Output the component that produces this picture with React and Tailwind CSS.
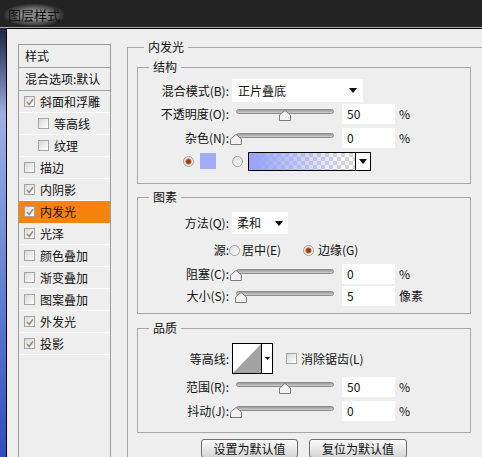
import React from 'react';

const layers = [
  { name: '斜面和浮雕', on: true },
  { name: '等高线', on: false, sub: true },
  { name: '纹理', on: false, sub: true },
  { name: '描边', on: false },
  { name: '内阴影', on: true },
  { name: '内发光', on: true, active: true },
  { name: '光泽', on: true },
  { name: '颜色叠加', on: false },
  { name: '渐变叠加', on: false },
  { name: '图案叠加', on: false },
  { name: '外发光', on: true },
  { name: '投影', on: true },
];

const Check = ({ on }) => (
  <span className="w-[11px] h-[11px] shrink-0 border border-[#a4a4a4] bg-gradient-to-br from-[#d9d9d9] to-white flex items-center justify-center">
    {on && (
      <svg width="8" height="8" viewBox="0 0 8 8">
        <path d="M1 4 L3.2 6.5 L7 1.2" stroke="#9c8a76" strokeWidth="1.6" fill="none" />
      </svg>
    )}
  </span>
);

const Radio = ({ on }) => (
  <svg width="11" height="11" viewBox="0 0 11 11" className="shrink-0">
    <defs>
      <linearGradient id="rg" x1="0" y1="0" x2="1" y2="1">
        <stop offset="0" stopColor="#dcdcdc" />
        <stop offset="1" stopColor="#ffffff" />
      </linearGradient>
    </defs>
    <circle cx="5.5" cy="5.5" r="5" fill="url(#rg)" stroke="#a0a0a0" />
    {on && <circle cx="5.5" cy="5.5" r="2.8" fill="#9a3a14" stroke="#d68a5c" strokeWidth="0.8" />}
  </svg>
);

const Arrow = () => (
  <svg width="8" height="5" viewBox="0 0 8 5">
    <path d="M0 0 H8 L4 5 Z" fill="#111" />
  </svg>
);

const Slider = ({ pos }) => (
  <div className="relative ml-[1px] w-[104px] h-[14px] shrink-0">
    <div className="absolute left-[6px] right-0 top-[2px] h-[5px] rounded-full border border-[#8c8c8c] bg-gradient-to-b from-[#9a9a9a] to-[#cfcfcf]" />
    <svg width="12" height="11" viewBox="0 0 12 11" className="absolute top-[3px]" style={{ left: pos }}>
      <path d="M6 0.5 L11.5 5 V10.5 H0.5 V5 Z" fill="#f2f2f2" stroke="#7c7c7c" />
    </svg>
  </div>
);

const Row = ({ label, className, children }) => (
  <div className={`flex items-center ${className}`}>
    <span className="w-[91px] shrink-0 text-right">{label}</span>
    {children}
  </div>
);

const SliderRow = ({ label, value, pos, unit = '%', className }) => (
  <Row label={label} className={className}>
    <Slider pos={pos} />
    <div className="ml-[8px] w-[53px] h-[20px] bg-white pl-[5px] leading-[20px] shrink-0">{value}</div>
    <span className="ml-[4px]">{unit}</span>
  </Row>
);

const Group = ({ title, className, children }) => (
  <fieldset className={`w-[334px] border border-[#a6a6a6] p-0 m-0 ${className}`}>
    <legend className="ml-[11px] px-[4px] leading-[14px]">{title}</legend>
    {children}
  </fieldset>
);

export default function App() {
  return (
    <div className="w-[482px] h-[457px] overflow-hidden bg-[#232323] text-[12px] leading-[14px] text-[#111] font-['Noto_Sans_CJK_SC',sans-serif]">
      <div className="h-[28px] border-b border-[#a8a8a8] pl-[4px] pt-[4px]">
        <span className="inline-block px-[4px] py-[3px] rounded-[8px] bg-[radial-gradient(ellipse_at_center,#8a8a8a_30%,rgba(60,60,60,0)_75%)] text-[13px] leading-[16px] text-[#101010]">图层样式</span>
      </div>
      <div className="flex h-[429px]">
        <div className="w-[6px] shrink-0 bg-gradient-to-b from-[#1c2440] via-[#9fb0e6] via-20% to-[#2e4dbd]" />
        <div className="flex flex-1 items-start bg-[#eeeeee] border-t border-l border-black">
          {/* 样式列表 */}
          <div className="ml-[11px] mt-[15px] w-[93px] h-[420px] shrink-0 border border-[#9c9c9c] bg-[#eeeeee]">
            <div className="h-[23px] border-b border-[#a4a4a4] pl-[6px] flex items-center">样式</div>
            <div className="h-[23px] border-b border-[#a4a4a4] pl-[6px] flex items-center">混合选项:默认</div>
            {layers.map((l) => (
              <div
                key={l.name}
                className={`h-[22px] flex items-center gap-[5px] border-b ${l.sub ? 'pl-[19px]' : 'pl-[5px]'} ${l.active ? 'bg-[#f7830f] border-[#f7830f]' : 'border-[#fafafa]'}`}
              >
                <Check on={l.on} />
                <span>{l.name}</span>
              </div>
            ))}
          </div>

          {/* 内发光 */}
          <fieldset className="ml-[16px] mt-[11px] w-[370px] h-[420px] shrink-0 border-t border-l border-r-0 border-b-0 border-[#a6a6a6] p-0 m-0">
            <legend className="ml-[16px] px-[4px] leading-[14px]">内发光</legend>
            <div className="pl-[9px] pt-[6px]">
              <Group title="结构">
                <div className="pt-[5px] pb-[10px]">
                  <Row label="混合模式(B):" className="h-[23px]">
                    <div className="ml-[3px] w-[131px] h-[23px] bg-white flex items-center justify-between pl-[6px] pr-[6px]">
                      <span>正片叠底</span>
                      <Arrow />
                    </div>
                  </Row>
                  <SliderRow label="不透明度(O):" value="50" pos={49} className="h-[24px]" />
                  <SliderRow label="杂色(N):" value="0" pos={0} className="h-[23px]" />
                  <div className="h-[24px] flex items-center pl-[45px]">
                    <Radio on />
                    <span className="ml-[6px] w-[16px] h-[16px] bg-[#a2acf6]" />
                    <span className="ml-[16px]"><Radio /></span>
                    <div className="ml-[5px] w-[123px] h-[19px] border border-black flex">
                      <div className="flex-1 [background:linear-gradient(to_right,#98a4f6_5%,rgba(152,164,246,0)_95%),repeating-conic-gradient(#d6d6d6_0_25%,#ffffff_0_50%)_0_0/8px_8px]" />
                      <div className="w-[15px] border-l border-black bg-white flex items-center justify-center">
                        <Arrow />
                      </div>
                    </div>
                  </div>
                </div>
              </Group>

              <Group title="图素" className="mt-[6px]">
                <div className="pt-[8px] pb-[6px]">
                  <Row label="方法(Q):" className="h-[22px]">
                    <div className="ml-[3px] w-[56px] h-[22px] bg-white flex items-center justify-between pl-[5px] pr-[5px]">
                      <span>柔和</span>
                      <Arrow />
                    </div>
                  </Row>
                  <Row label="源:" className="h-[20px] mt-[6px]">
                    <Radio />
                    <span className="ml-[2px] w-[61px]">居中(E)</span>
                    <Radio on />
                    <span className="ml-[4px]">边缘(G)</span>
                  </Row>
                  <SliderRow label="阻塞(C):" value="0" pos={0} className="h-[22px] mt-[3px]" />
                  <SliderRow label="大小(S):" value="5" pos={5} unit="像素" className="h-[22px]" />
                </div>
              </Group>

              <Group title="品质" className="mt-[7px]">
                <div className="pt-[8px] pb-[10px]">
                  <Row label="等高线:" className="h-[31px]">
                    <div className="ml-[3px] w-[41px] h-[31px] border border-black bg-white flex shrink-0">
                      <svg width="28" height="29" viewBox="0 0 28 29">
                        <path d="M0 29 L28 0 V29 Z" fill="#a3a3a3" />
                      </svg>
                      <div className="flex-1 border-l border-black flex items-center justify-center">
                        <svg width="5" height="3" viewBox="0 0 5 3"><path d="M0 0 H5 L2.5 3 Z" fill="#111" /></svg>
                      </div>
                    </div>
                    <span className="ml-[13px]"><Check /></span>
                    <span className="ml-[4px]">消除锯齿(L)</span>
                  </Row>
                  <SliderRow label="范围(R):" value="50" pos={49} className="h-[22px] mt-[2px]" />
                  <SliderRow label="抖动(J):" value="0" pos={0} className="h-[22px] mt-[2px]" />
                </div>
              </Group>

              <div className="w-[334px] flex justify-center gap-[11px] mt-[6px]">
                <button className="w-[97px] h-[19px] rounded-[3px] border border-[#6f6f6f] bg-gradient-to-b from-[#fbfbfb] to-[#d6d6d6] leading-[17px]">设置为默认值</button>
                <button className="w-[98px] h-[19px] rounded-[3px] border border-[#6f6f6f] bg-gradient-to-b from-[#fbfbfb] to-[#d6d6d6] leading-[17px]">复位为默认值</button>
              </div>
            </div>
          </fieldset>
        </div>
      </div>
    </div>
  );
}
